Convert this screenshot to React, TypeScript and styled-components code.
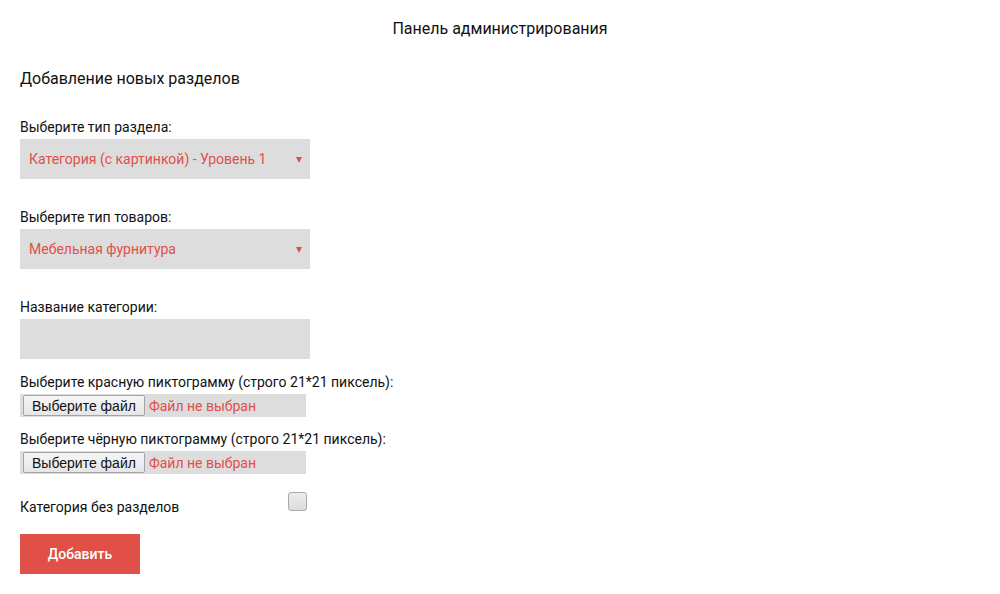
import React from 'react';
import styled, { createGlobalStyle } from 'styled-components';

const GlobalStyle = createGlobalStyle`
  body {
    margin: 0;
    background: #fff;
    font-family: Roboto, 'Liberation Sans', Arial, sans-serif;
    color: #111;
  }
`;

const Page = styled.div`
  width: 1000px;
  height: 594px;
  padding: 19px 20px 0;
  box-sizing: border-box;
`;

const Title = styled.h1`
  margin: 0;
  text-align: center;
  font-size: 16px;
  font-weight: 400;
  line-height: 20px;
`;

const Heading = styled.h2`
  margin: 30px 0 0;
  font-size: 16px;
  font-weight: 400;
  line-height: 20px;
`;

const Form = styled.form`
  display: flex;
  flex-direction: column;
  margin-top: 28px;
`;

const Field = styled.div<{ $gap?: number }>`
  display: flex;
  flex-direction: column;
  margin-top: ${p => p.$gap ?? 0}px;
`;

const Label = styled.label`
  font-size: 14px;
  line-height: 20px;
  margin-bottom: 2px;
`;

const Select = styled.div`
  position: relative;
  width: 290px;
  height: 40px;
  background: #dddddd;
  color: #e0504a;
  font-size: 14px;
  display: flex;
  align-items: center;
  padding-left: 9px;
  box-sizing: border-box;
`;

const Arrow = styled.span`
  position: absolute;
  right: 8px;
  top: 18px;
  width: 0;
  height: 0;
  border-left: 3px solid transparent;
  border-right: 3px solid transparent;
  border-top: 6px solid #e0504a;
`;

const TextInput = styled.div`
  width: 290px;
  height: 40px;
  background: #dddddd;
`;

const FileRow = styled.div`
  width: 286px;
  height: 23px;
  background: #dddddd;
  display: flex;
  align-items: center;
  padding-left: 3px;
  box-sizing: border-box;
  font-size: 14px;
`;

const FileButton = styled.span`
  height: 21px;
  padding: 0 8px;
  display: flex;
  align-items: center;
  border: 1px solid #a4a4a4;
  border-radius: 2px;
  background: linear-gradient(#f6f6f6, #e6e6e6);
  box-sizing: border-box;
  color: #111;
  font-family: 'Liberation Sans', Arial, sans-serif;
  font-size: 14px;
`;

const FileStatus = styled.span`
  margin-left: 4px;
  color: #e0504a;
`;

const CheckRow = styled.div`
  display: flex;
  align-items: flex-start;
  margin-top: 18px;
  font-size: 14px;
`;

const CheckText = styled.span`
  width: 268px;
  margin-top: 5px;
  line-height: 20px;
`;

const CheckBox = styled.span`
  width: 19px;
  height: 19px;
  border: 1px solid #a9a9a9;
  border-radius: 3px;
  box-sizing: border-box;
  background: linear-gradient(#ececec, #dcdcdc);
`;

const Submit = styled.button`
  margin-top: 17px;
  width: 120px;
  height: 40px;
  border: none;
  background: #e04f48;
  color: #fff;
  font-family: Roboto, 'Liberation Sans', Arial, sans-serif;
  font-size: 14px;
  font-weight: 500;
  cursor: pointer;
`;

export default function App() {
  return (
    <Page>
      <GlobalStyle />
      <Title>Панель администрирования</Title>
      <Heading>Добавление новых разделов</Heading>
      <Form>
        <Field>
          <Label>Выберите тип раздела:</Label>
          <Select>
            Категория (с картинкой) - Уровень 1
            <Arrow />
          </Select>
        </Field>
        <Field $gap={28}>
          <Label>Выберите тип товаров:</Label>
          <Select>
            Мебельная фурнитура
            <Arrow />
          </Select>
        </Field>
        <Field $gap={28}>
          <Label>Название категории:</Label>
          <TextInput />
        </Field>
        <Field $gap={13}>
          <Label>Выберите красную пиктограмму (строго 21*21 пиксель):</Label>
          <FileRow>
            <FileButton>Выберите файл</FileButton>
            <FileStatus>Файл не выбран</FileStatus>
          </FileRow>
        </Field>
        <Field $gap={12}>
          <Label>Выберите чёрную пиктограмму (строго 21*21 пиксель):</Label>
          <FileRow>
            <FileButton>Выберите файл</FileButton>
            <FileStatus>Файл не выбран</FileStatus>
          </FileRow>
        </Field>
        <CheckRow>
          <CheckText>Категория без разделов</CheckText>
          <CheckBox />
        </CheckRow>
        <Submit type="button">Добавить</Submit>
      </Form>
    </Page>
  );
}
